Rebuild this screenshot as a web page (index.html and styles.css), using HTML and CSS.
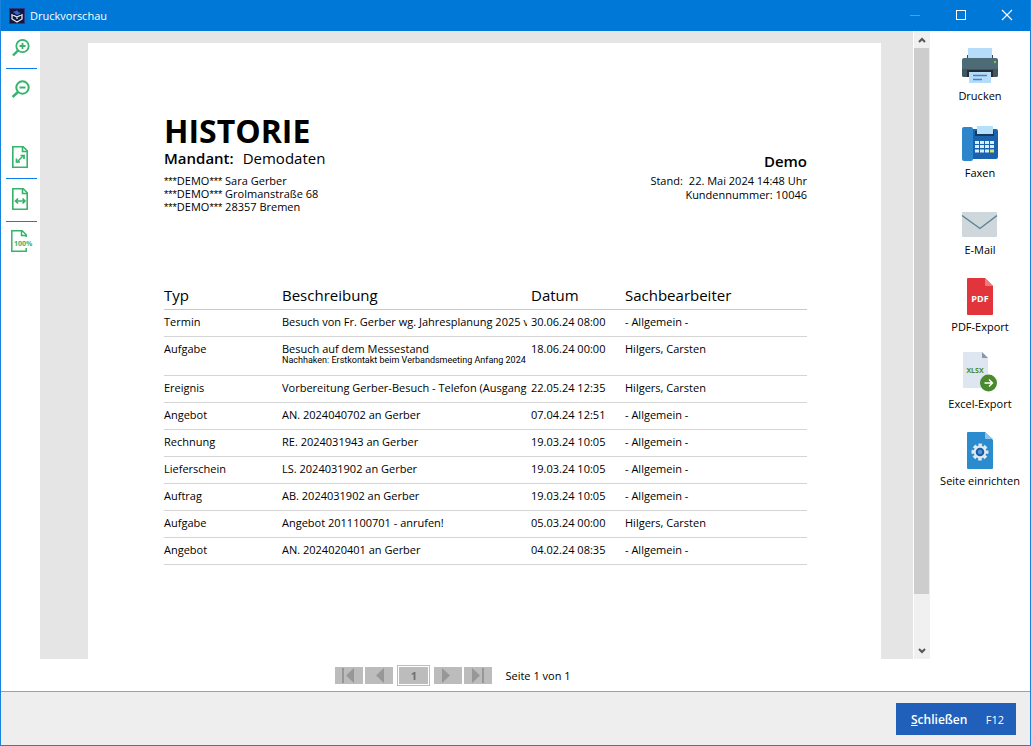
FILE: index.html
```html
<!DOCTYPE html>
<html lang="de">
<head>
<meta charset="utf-8">
<title>Druckvorschau</title>
<link rel="stylesheet" href="styles.css">
</head>
<body>
<div class="window">
  <header class="titlebar">
    <svg class="app-icon" viewBox="0 0 16 16" width="16" height="16" aria-hidden="true">
      <rect x="0.500" y="0.500" width="15" height="15" fill="#14183a" stroke="#2a3a86"/>
      <path d="M3 6v5l5 3 5-3V6M3 6.500l5 2.500 5-2.500M8 9v2" fill="none" stroke="#e8ecf4" stroke-width="1.300"/>
      <path d="M4 4l3-1 1-1 1 2 3 1-4 2z" fill="#3468d8"/>
    </svg>
    <span class="title">Druckvorschau</span>
    <div class="window-controls">
      <button class="wc" type="button" aria-label="Minimieren" disabled><svg viewBox="0 0 12 12" width="12" height="12"><path d="M1 5.500h10" stroke="#4ba0e4" fill="none"/></svg></button>
      <button class="wc" type="button" aria-label="Maximieren"><svg viewBox="0 0 12 12" width="12" height="12"><rect x="1.500" y="0.500" width="9" height="9" stroke="#fff" fill="none"/></svg></button>
      <button class="wc" type="button" aria-label="Fenster schließen"><svg viewBox="0 0 12 12" width="12" height="12"><path d="M1 0l10 10M11 0L1 10" stroke="#fff" stroke-width="1.100" fill="none"/></svg></button>
    </div>
  </header>

  <main class="main">
    <nav class="zoombar" aria-label="Zoom">
      <button class="tool tool-first" type="button" aria-label="Vergrößern"><svg viewBox="0 0 24 24" width="24" height="24"><g fill="none" stroke="#35b36b"><circle cx="13.500" cy="10" r="6.200" stroke-width="1.800"/><path d="M9 14.500L4 19.500" stroke-width="2.400"/><path d="M10.500 10h6M13.500 7v6" stroke-width="1.800"/></g></svg></button>
      <button class="tool" type="button" aria-label="Verkleinern"><svg viewBox="0 0 24 24" width="24" height="24"><g fill="none" stroke="#35b36b"><circle cx="13.500" cy="9.500" r="6.200" stroke-width="2"/><path d="M9 14L3.500 19" stroke-width="2.400"/><path d="M10.500 9.500h6" stroke-width="2"/></g></svg></button>
      <button class="tool tool-group" type="button" aria-label="Ganze Seite"><svg viewBox="0 0 24 24" width="24" height="24"><g fill="none" stroke="#35b36b" stroke-width="1.600"><path d="M3.800 1.800h10.400l4 4v16.400H3.800z"/><path d="M13.500 2v4.500H18"/><path d="M8 17l6.500-6.500" stroke-width="1.400"/><path d="M11.500 10.500H15V14M7.500 13.500V17H11" stroke-width="1.700"/></g></svg></button>
      <button class="tool" type="button" aria-label="Seitenbreite"><svg viewBox="0 0 24 24" width="24" height="24"><g fill="none" stroke="#35b36b" stroke-width="1.600"><path d="M3.800 .8h10.400l4 4v16.400H3.800z"/><path d="M13.500 1v4.500H18"/><path d="M7 13h8M9 10.500L6.500 13 9 15.500M13.500 10.500L16 13l-2.500 2.500" stroke-width="1.700"/></g></svg></button>
      <button class="tool tool-last" type="button" aria-label="100 Prozent"><svg viewBox="0 0 24 24" width="24" height="24"><g fill="none" stroke="#35b36b" stroke-width="1.500"><path d="M17.200 7V4.800l-4-4H2.800v20.400h14.400V18"/><path d="M12.500 1v4.500H17"/></g><text class="hundred" x="5" y="16">100%</text></svg></button>
    </nav>

    <section class="center">
      <div class="preview">
        <div class="canvas">
          <article class="paper">
            <div class="head">
              <div>
                <h1 class="heading">HISTORIE</h1>
                <p class="client"><span class="client-label">Mandant:</span>Demodaten</p>
                <p class="address"><span class="stars">***</span>DEMO<span class="stars">***</span> Sara Gerber<br><span class="stars">***</span>DEMO<span class="stars">***</span> Grolmanstraße 68<br><span class="stars">***</span>DEMO<span class="stars">***</span> 28357 Bremen</p>
              </div>
              <div class="meta">
                <p class="company">Demo</p>
                <p class="meta-line"><span class="meta-label">Stand:</span>22. Mai 2024 14:48 Uhr</p>
                <p class="meta-line">Kundennummer: 10046</p>
              </div>
            </div>
            <table class="history">
              <colgroup><col class="c-type"><col class="c-desc"><col class="c-date"><col></colgroup>
              <thead><tr><th>Typ</th><th>Beschreibung</th><th>Datum</th><th>Sachbearbeiter</th></tr></thead>
              <tbody>
                <tr><td>Termin</td><td><div class="clip">Besuch von Fr. Gerber wg. Jahresplanung 2025 v</div></td><td>30.06.24 08:00</td><td>- Allgemein -</td></tr>
                <tr class="tall"><td>Aufgabe</td><td><div>Besuch auf dem Messestand</div><div class="note">Nachhaken: Erstkontakt beim Verbandsmeeting Anfang 2024</div></td><td>18.06.24 00:00</td><td>Hilgers, Carsten</td></tr>
                <tr><td>Ereignis</td><td><div class="clip">Vorbereitung Gerber-Besuch - Telefon (Ausgang</div></td><td>22.05.24 12:35</td><td>Hilgers, Carsten</td></tr>
                <tr><td>Angebot</td><td>AN. 2024040702 an Gerber</td><td>07.04.24 12:51</td><td>- Allgemein -</td></tr>
                <tr><td>Rechnung</td><td>RE. 2024031943 an Gerber</td><td>19.03.24 10:05</td><td>- Allgemein -</td></tr>
                <tr><td>Lieferschein</td><td>LS. 2024031902 an Gerber</td><td>19.03.24 10:05</td><td>- Allgemein -</td></tr>
                <tr><td>Auftrag</td><td>AB. 2024031902 an Gerber</td><td>19.03.24 10:05</td><td>- Allgemein -</td></tr>
                <tr><td>Aufgabe</td><td>Angebot 2011100701 - anrufen!</td><td>05.03.24 00:00</td><td>Hilgers, Carsten</td></tr>
                <tr><td>Angebot</td><td>AN. 2024020401 an Gerber</td><td>04.02.24 08:35</td><td>- Allgemein -</td></tr>
              </tbody>
            </table>
          </article>
        </div>
        <div class="scrollbar">
          <button class="scroll-btn" type="button" aria-label="Nach oben"><svg viewBox="0 0 8 6" width="8" height="6"><path d="M1 5l3-3 3 3" fill="none" stroke="#555" stroke-width="2"/></svg></button>
          <div class="scroll-track"><div class="scroll-thumb"></div></div>
          <button class="scroll-btn" type="button" aria-label="Nach unten"><svg viewBox="0 0 8 6" width="8" height="6"><path d="M1 1l3 3 3-3" fill="none" stroke="#555" stroke-width="2"/></svg></button>
        </div>
      </div>
      <div class="pager">
        <button class="page-btn" type="button" aria-label="Erste Seite"><svg viewBox="0 0 28 17" width="28" height="17"><path d="M7 1h2v15H7zM19 1v15l-8-7.500z" fill="#979797"/></svg></button>
        <button class="page-btn" type="button" aria-label="Vorige Seite"><svg viewBox="0 0 28 17" width="28" height="17"><path d="M19 1v15l-8-7.500z" fill="#979797"/></svg></button>
        <button class="page-current" type="button">1</button>
        <button class="page-btn" type="button" aria-label="Nächste Seite"><svg viewBox="0 0 28 17" width="28" height="17"><path d="M8 1v15l8-7.500z" fill="#979797"/></svg></button>
        <button class="page-btn" type="button" aria-label="Letzte Seite"><svg viewBox="0 0 28 17" width="28" height="17"><path d="M8 1v15l8-7.500zM18 1h2v15h-2z" fill="#979797"/></svg></button>
        <span class="page-info">Seite 1 von 1</span>
      </div>
    </section>

    <aside class="actions">
      <button class="action" type="button">
        <svg viewBox="0 0 40 40" width="40" height="40"><path d="M7 9h26v6H7z" fill="#37474f"/><path d="M8 2h24v10H8z" fill="#b5dcf8"/><path d="M4 12h32a2 2 0 0 1 2 2v15a2 2 0 0 1-2 2H4a2 2 0 0 1-2-2V14a2 2 0 0 1 2-2z" fill="#4d6a77"/><path d="M2 23h36v6a2 2 0 0 1-2 2H4a2 2 0 0 1-2-2z" fill="#3f5560"/><circle cx="35" cy="16" r="1.200" fill="#8bc34a"/><path d="M7 24h26v7H7z" fill="#232d32"/><path d="M9 26h22v11H9z" fill="#b5dcf8"/><path d="M13 29.500h14M13 33.500h9" stroke="#4a80c8" stroke-width="1.500"/></svg>
        <span>Drucken</span>
      </button>
      <button class="action" type="button">
        <svg viewBox="0 0 40 40" width="40" height="40"><path d="M12 6h24a2 2 0 0 1 2 2v26a2 2 0 0 1-2 2H12z" fill="#1b62ae"/><rect x="2" y="4" width="11" height="34" rx="2" fill="#2d86cc"/><path d="M15 8h19v5H15z" fill="#143a5c"/><path d="M17 3h16v8H17z" fill="#b5e0fa"/><g fill="#d6efff"><path d="M15 18h4v3h-4zM20 18h4v3h-4zM25 18h4v3h-4zM30 18h4v3h-4zM15 22h4v3h-4zM20 22h4v3h-4zM25 22h4v3h-4zM30 22h4v3h-4zM15 26.500h4v3h-4zM20 26.500h4v3h-4zM25 26.500h4v3h-4z"/></g><path d="M30 26.500h4v3h-4z" fill="#d5e56c"/></svg>
        <span>Faxen</span>
      </button>
      <button class="action" type="button">
        <svg viewBox="0 0 40 40" width="40" height="40"><rect x="2" y="12" width="35" height="25" rx="1" fill="#cdd7dc"/><path d="M2 15.500l18 13 17-13" fill="none" stroke="#5b7f90" stroke-width="1.400"/></svg>
        <span>E-Mail</span>
      </button>
      <button class="action" type="button">
        <svg viewBox="0 0 40 40" width="40" height="40"><path d="M8 1h17l8 8v28a1 1 0 0 1-1 1H8a1 1 0 0 1-1-1V2a1 1 0 0 1 1-1z" fill="#e2353b"/><path d="M25 1l8 8h-7a1 1 0 0 1-1-1z" fill="#f07a7e"/><text class="pdf-text" x="20" y="25">PDF</text></svg>
        <span>PDF-Export</span>
      </button>
      <button class="action" type="button">
        <svg viewBox="0 0 40 40" width="40" height="40"><path d="M4-2h18l6 6v30H4a1 1 0 0 1-1-1V-1a1 1 0 0 1 1-1z" fill="#dee6f1"/><path d="M22-2l6 6h-6z" fill="#8798a6"/><text class="xlsx-text" x="15" y="19">XLSX</text><circle cx="28.500" cy="29" r="8.500" fill="#4a8a2e"/><path d="M24.500 29h7.500M29 25.500l3.500 3.500-3.500 3.500" fill="none" stroke="#fff" stroke-width="1.400"/></svg>
        <span>Excel-Export</span>
      </button>
      <button class="action" type="button">
        <svg viewBox="0 0 40 40" width="40" height="40"><path d="M8 1h17l8 8v28a1 1 0 0 1-1 1H8a1 1 0 0 1-1-1V2a1 1 0 0 1 1-1z" fill="#2a8bcf"/><path d="M25 1l8 7h-7a1 1 0 0 1-1-1z" fill="#8cc4ec"/><circle cx="20" cy="21" r="7" fill="none" stroke="#e3e9ee" stroke-width="3" stroke-dasharray="3.500 1.998" stroke-dashoffset="1.750"/><circle cx="20" cy="21" r="6.400" fill="#e3e9ee"/><circle cx="20" cy="21" r="3.300" fill="#4a9ad6" stroke="#1b5aa6" stroke-width="2"/></svg>
        <span>Seite einrichten</span>
      </button>
    </aside>
  </main>

  <footer class="footer">
    <button class="close-btn" type="button"><span class="close-label"><u>S</u>chließen</span><span class="close-key">F12</span></button>
  </footer>
</div>
</body>
</html>
```

FILE: styles.css
```css
* {
  box-sizing: border-box;
}

body {
  margin: 0;
  background: #fff;
  color: #000;
  font-family: "Open Sans", "Noto Sans", sans-serif;
  font-size: 11px;
  line-height: 13px;
}

button {
  margin: 0;
  padding: 0;
  border: 0;
  background: none;
  color: inherit;
  font: inherit;
}

svg {
  display: block;
  overflow: visible;
}

p,
h1 {
  margin: 0;
}

.window {
  display: flex;
  flex-direction: column;
  min-height: 100vh;
  border: 1px solid #1883dc;
  border-top: 0;
}

.titlebar {
  display: flex;
  align-items: center;
  height: 31px;
  padding-left: 8px;
  background: #0078d7;
  color: #fff;
}

.title {
  margin-left: 5px;
  line-height: 16px;
}

.window-controls {
  display: flex;
  height: 100%;
  margin-left: auto;
}

.wc {
  display: grid;
  place-items: center;
  width: 46px;
}

.main {
  display: grid;
  flex: 1;
  grid-template-columns: 39px 1fr 100px;
}

.zoombar {
  display: flex;
  flex-direction: column;
  padding: 0 3px 0 5px;
}

.tool {
  display: grid;
  place-items: center start;
  height: 42px;
  padding-left: 3px;
}

.tool + .tool {
  height: 43px;
  border-top: 1px solid #0a80f0;
}

.tool-first {
  height: 37px;
  padding-bottom: 4px;
}

.tool + .tool-group {
  margin-top: 24px;
  border-top: 0;
}

.tool + .tool-last {
  height: 40px;
}

.hundred {
  fill: #35b36b;
  font-size: 7px;
  font-weight: 700;
}

.center {
  display: flex;
  flex-direction: column;
}

.preview {
  display: flex;
  flex: 1;
}

.canvas {
  display: flex;
  flex: 1;
  margin-right: 1px;
  padding: 12px 32px 0 48px;
  background: #e5e5e5;
}

.paper {
  flex: 1;
  padding: 70px 74px 20px 76px;
  background: #fff;
}

.head {
  display: flex;
  align-items: flex-start;
  justify-content: space-between;
}

.heading {
  font-size: 32px;
  font-weight: 700;
  line-height: 36px;
}

.client {
  font-size: 15px;
  line-height: 18px;
}

.client-label {
  margin-right: 9px;
  font-weight: 600;
}

.address {
  margin-top: 7px;
}

.stars {
  font-family: "Liberation Sans", Arial, sans-serif;
  line-height: 1;
}

.meta {
  padding-top: 36px;
  text-align: right;
}

.company {
  margin-bottom: 1px;
  font-size: 15px;
  font-weight: 600;
  line-height: 24px;
}

.meta-line {
  line-height: 14px;
}

.meta-label {
  margin-right: 6px;
}

.history {
  width: 100%;
  margin-top: 68px;
  border-collapse: collapse;
  table-layout: fixed;
}

.c-type {
  width: 118px;
}

.c-desc {
  width: 249px;
}

.c-date {
  width: 94px;
}

.history th {
  height: 28px;
  padding: 0;
  border-bottom: 1px solid #c8c8c8;
  font-size: 15px;
  font-weight: 500;
  line-height: 20px;
  text-align: left;
}

.history td {
  height: 27px;
  padding: 4px 0 0;
  border-bottom: 1px solid #d4d4d4;
  line-height: 15px;
  vertical-align: top;
  white-space: nowrap;
}

.history .tall td {
  height: 39px;
}

.clip {
  margin-right: 4px;
  overflow: hidden;
}

.history .note {
  font-family: Roboto, sans-serif;
  font-size: 9px;
  line-height: 9px;
}

.scrollbar {
  display: flex;
  flex-direction: column;
  width: 16px;
  background: #f0f0f0;
}

.scroll-btn {
  display: grid;
  place-items: center;
  height: 17px;
}

.scroll-track {
  flex: 1;
}

.scroll-thumb {
  width: 15px;
  height: 92%;
  background: #cdcdcd;
}

.pager {
  display: flex;
  align-items: center;
  justify-content: center;
  gap: 2px;
  height: 32px;
  padding-right: 64px;
}

.page-btn {
  width: 28px;
  height: 17px;
  background: #bcbcbc;
}

.page-current {
  width: 33px;
  height: 21px;
  margin: 0 2px;
  border: 1px solid #bcbcbc;
  background: #bcbcbc;
  box-shadow: inset 0 0 0 1px #fff;
  color: #707070;
  font-weight: 700;
}

.page-info {
  margin-left: 11px;
}

.actions {
  display: flex;
  flex-direction: column;
  gap: 19px;
  padding-top: 15px;
}

.action {
  display: flex;
  flex-direction: column;
  align-items: center;
  gap: 2px;
  font-weight: 500;
  line-height: 16px;
  white-space: nowrap;
}

.pdf-text {
  fill: #fff;
  font-size: 9px;
  font-weight: 700;
  text-anchor: middle;
}

.xlsx-text {
  fill: #4a8a2e;
  font-size: 7px;
  font-weight: 700;
  text-anchor: middle;
}

.footer {
  display: flex;
  justify-content: flex-end;
  padding: 11px 14px 10px;
  border-top: 1px solid #a0a0a0;
  background: #eee;
}

.close-btn {
  display: flex;
  align-items: center;
  justify-content: space-between;
  width: 120px;
  height: 32px;
  padding: 0 12px 0 15px;
  background: #2060bb;
  color: #fff;
}

.close-label {
  font-size: 12px;
  font-weight: 600;
}
```
